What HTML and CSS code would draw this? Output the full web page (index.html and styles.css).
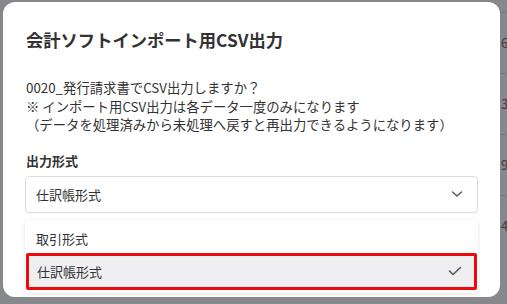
FILE: index.html
```html
<!DOCTYPE html>
<html lang="ja">
<head>
    <meta charset="UTF-8" />
    <title>会計ソフトインポート用CSV出力</title>
    <link rel="stylesheet" href="styles.css">
</head>
<body>

<div class="behind">
    <div class="behind-row">6</div>
    <div class="behind-row">3</div>
    <div class="behind-row">9</div>
    <div class="behind-row">4</div>
</div>

<div class="modal">
    <h1 class="modal-title">会計ソフトインポート用CSV出力</h1>

    <div class="message">
        <p>0020_発行請求書でCSV出力しますか？</p>
        <p>※ インポート用CSV出力は各データ一度のみになります</p>
        <p>（データを処理済みから未処理へ戻すと再出力できるようになります）</p>
    </div>

    <div class="field-label">出力形式</div>

    <div class="select">
        <span>仕訳帳形式</span>
        <svg class="chevron" width="12" height="8" viewBox="0 0 12 8">
            <path d="M1.5 2 L6 6 L10.5 2" fill="none" stroke="#555" stroke-width="1.4" stroke-linecap="round" stroke-linejoin="round"/>
        </svg>
    </div>

    <ul class="options">
        <li class="option">取引形式</li>
        <li class="option selected">
            <span>仕訳帳形式</span>
            <svg class="check" width="14" height="10" viewBox="0 0 14 10">
                <path d="M1.5 5 L5 8.5 L12.5 1.5" fill="none" stroke="#555" stroke-width="1.5" stroke-linecap="round" stroke-linejoin="round"/>
            </svg>
        </li>
    </ul>
</div>

</body>
</html>
```

FILE: styles.css
```css
body {
    margin: 0;
    height: 304px;
    overflow: hidden;
    background-color: #87888b;
    font-family: "Noto Sans CJK JP", "Noto Sans", sans-serif;
    color: #333;
}
.behind {
    position: absolute;
    top: 0;
    right: 0;
    width: 7px;
    padding-top: 12px;
}
.behind-row {
    height: 60px;
    line-height: 60px;
    border-top: 1px solid #76777a;
    color: #3c3c3e;
    font-size: 13px;
    padding-left: 1px;
}
.modal {
    position: relative;
    margin: 2px 0 0 3px;
    width: 497px;
    height: 295px;
    box-sizing: border-box;
    padding: 26px 22px 0 22px;
    background-color: #fff;
    border-radius: 12px;
}
.modal-title {
    margin: 0;
    font-size: 17.3px;
    line-height: 24px;
    font-weight: bold;
    color: #333;
    padding-left: 1px;
}
.message {
    margin-top: 27px;
    font-size: 13.35px;
    line-height: 18.5px;
    padding-left: 1px;
}
.message p {
    margin: 0;
}
.field-label {
    margin-top: 17px;
    font-size: 13px;
    line-height: 18px;
    font-weight: bold;
    padding-left: 1px;
}
.select {
    margin-top: 6px;
    height: 37px;
    box-sizing: border-box;
    border: 1px solid #dcdcde;
    border-radius: 4px;
    display: flex;
    align-items: center;
    justify-content: space-between;
    padding: 0 14px 0 10px;
    font-size: 13px;
}
.options {
    list-style: none;
    margin: 7px 0 0 0;
    padding: 4px 0 3px 0;
    background-color: #fff;
    border-radius: 4px;
    box-shadow: 0 1px 4px rgba(0,0,0,0.12);
}
.option {
    height: 29px;
    display: flex;
    align-items: center;
    justify-content: space-between;
    padding: 0 14px 0 11px;
    font-size: 13px;
}
.option.selected {
    height: 37px;
    box-sizing: border-box;
    background-color: #efeff1;
    border: 3px solid #ec0a0a;
    border-radius: 2px;
    padding: 0 12px 0 8px;
    margin: 0 1px;
}
```
